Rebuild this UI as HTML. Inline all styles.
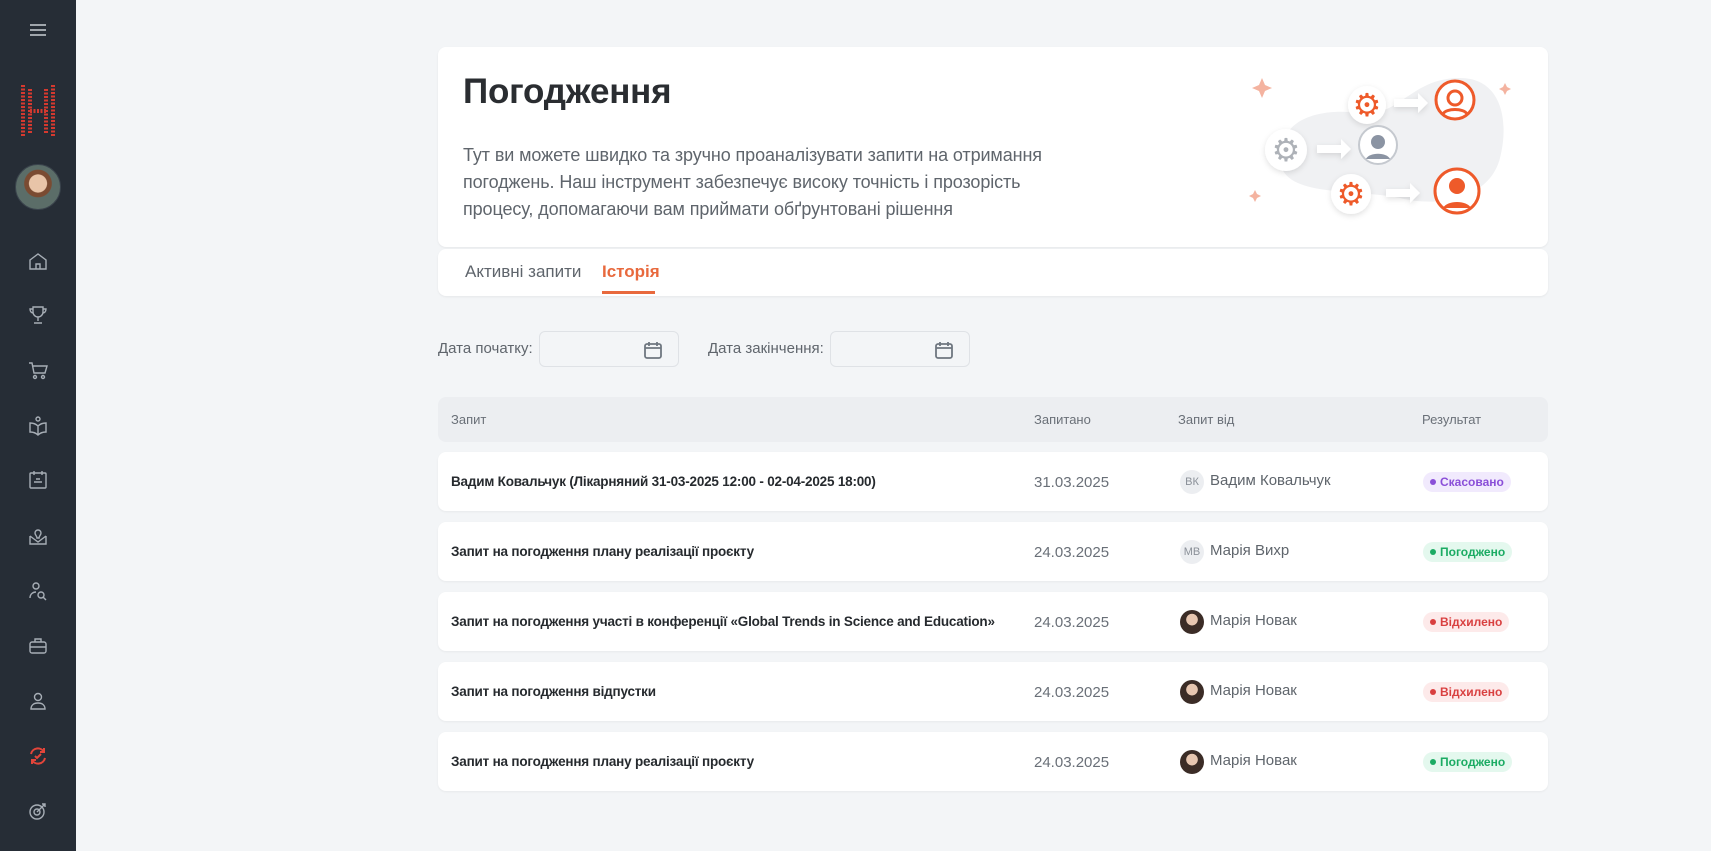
<!DOCTYPE html>
<html><head><meta charset="utf-8"><style>
*{box-sizing:border-box;margin:0;padding:0}
body{width:1711px;height:851px;background:#f3f5f7;font-family:"Liberation Sans",sans-serif;position:relative;overflow:hidden;color:#2b2f33}
.sb{position:absolute;left:0;top:0;width:76px;height:851px;background:#262d36}
.ic{position:absolute;left:26px;width:24px;height:24px}
.card{position:absolute;left:438px;width:1110px;background:#fff;border-radius:8px;box-shadow:0 1px 2px rgba(0,0,0,.06)}
h1{position:absolute;left:463px;top:72px;font-size:35px;font-weight:bold;color:#2a2d31;letter-spacing:-.2px}
.p{position:absolute;left:463px;top:142px;font-size:18px;line-height:27px;color:#5f656c;letter-spacing:-.1px}
.tab{position:absolute;top:262px;font-size:17px}
.lbl{position:absolute;top:340px;font-size:15px;color:#5f656c}
.inp{position:absolute;top:331px;width:140px;height:36px;border:1px solid #dfe2e6;border-radius:6px;background:#f3f5f7}
.inp svg{position:absolute;right:15px;top:8px}
.th{position:absolute;top:397px;left:438px;width:1110px;height:45px;background:#eceef1;border-radius:8px}
.th span{position:absolute;top:15px;font-size:13px;color:#6a7078}
.row{position:absolute;left:438px;width:1110px;height:59px;background:#fff;border-radius:8px;box-shadow:0 1px 2px rgba(0,0,0,.05)}
.row .t{position:absolute;left:13px;top:22px;font-size:13.5px;font-weight:bold;color:#262a2e;letter-spacing:-.2px}
.row .d{position:absolute;left:596px;top:22px;font-size:15px;color:#6a7078}
.row .av{position:absolute;left:742px;top:18px;width:24px;height:24px;border-radius:50%;background:#eceef1;font-size:11px;color:#8a9098;text-align:center;line-height:24px}
.row .av.ph{background:radial-gradient(circle at 50% 40%,#e7c6b0 0 30%,#3b2c26 32%)}
.row .n{position:absolute;left:772px;top:20px;font-size:15px;color:#5f656c}
.b{position:absolute;left:985px;top:20px;height:20px;border-radius:10px;font-size:12px;padding:0 7px 0 17px;line-height:20px;font-weight:bold}
.b:before{content:"";position:absolute;left:7px;top:7px;width:6px;height:6px;border-radius:50%;background:currentColor}
.g{background:#e4f8ee;color:#1bab63}.r{background:#fdeaea;color:#d94040}.v{background:#f1eafd;color:#8a4fd8}
</style></head><body>
<div class="sb">
<svg class="ic" style="top:18px" viewBox="0 0 24 24" stroke="#c9ced4" stroke-width="1.6"><path d="M4 7h16M4 12h16M4 17h16"/></svg>
<svg style="position:absolute;left:20px;top:85px" width="36" height="52" viewBox="0 0 36 52"><g fill="none" stroke="#d5392f" stroke-width="4" stroke-dasharray="2 1.5"><path d="M3 0v52M10 4v44M26 4v44M33 0v52M10 26h16"/></g></svg>
<div style="position:absolute;left:15px;top:164px;width:46px;height:46px;border-radius:50%;background:radial-gradient(circle at 50% 42%,#e8c4a8 0 26%,#7a4b32 28% 40%,#5b6d68 42%);border:1px solid #3a434c"></div>
<svg class="ic" style="top:249px" viewBox="0 0 24 24" fill="none" stroke="#a7aeb6" stroke-width="1.4"><path d="M4 11l8-6 8 6v9H4zM10 20v-5h4v5"/></svg>
<svg class="ic" style="top:303px" viewBox="0 0 24 24" fill="none" stroke="#a7aeb6" stroke-width="1.4"><path d="M7 4h10v5a5 5 0 01-10 0zM7 6H4c0 3 2 4 3 4M17 6h3c0 3-2 4-3 4M12 14v4M8 20h8"/></svg>
<svg class="ic" style="top:358px" viewBox="0 0 24 24" fill="none" stroke="#a7aeb6" stroke-width="1.4"><path d="M3 5h3l2 10h11l2-7H7"/><circle cx="9" cy="19" r="1.5"/><circle cx="17" cy="19" r="1.5"/></svg>
<svg class="ic" style="top:414px" viewBox="0 0 24 24" fill="none" stroke="#a7aeb6" stroke-width="1.4"><circle cx="12" cy="5" r="2"/><path d="M4 9c3 0 6 1 8 3 2-2 5-3 8-3v9c-3 0-6 1-8 3-2-2-5-3-8-3zM12 12v9"/></svg>
<svg class="ic" style="top:468px" viewBox="0 0 24 24" fill="none" stroke="#a7aeb6" stroke-width="1.4"><rect x="4" y="5" width="16" height="15" rx="1"/><path d="M8 3v4M16 3v4M8 14h8M10 11h4"/></svg>
<svg class="ic" style="top:524px" viewBox="0 0 24 24" fill="none" stroke="#a7aeb6" stroke-width="1.4"><path d="M4 12v8h16v-8M4 12l8 6 8-6"/><path d="M9 9a3 3 0 116 0c0 2-2 3-2 5h-2c0-2-2-3-2-5z"/></svg>
<svg class="ic" style="top:579px" viewBox="0 0 24 24" fill="none" stroke="#a7aeb6" stroke-width="1.4"><circle cx="10" cy="7" r="3"/><path d="M4 19c0-4 3-6 6-6"/><circle cx="15" cy="16" r="3"/><path d="M17 18l3 3"/></svg>
<svg class="ic" style="top:634px" viewBox="0 0 24 24" fill="none" stroke="#a7aeb6" stroke-width="1.4"><rect x="4" y="8" width="16" height="11" rx="2"/><path d="M9 8V5h6v3M4 13h16"/></svg>
<svg class="ic" style="top:689px" viewBox="0 0 24 24" fill="none" stroke="#a7aeb6" stroke-width="1.4"><circle cx="12" cy="8" r="3.5"/><path d="M5 20c0-4 3-6 7-6s7 2 7 6z"/></svg>
<svg class="ic" style="top:744px" viewBox="0 0 24 24" fill="none" stroke="#e3453a" stroke-width="2"><path d="M5 10a7 7 0 0113-2M19 14a7 7 0 01-13 2M18 4v4h-4M6 20v-4h4M9 12l2 2 4-4"/></svg>
<svg class="ic" style="top:799px" viewBox="0 0 24 24" fill="none" stroke="#a7aeb6" stroke-width="1.4"><circle cx="11" cy="13" r="7"/><circle cx="11" cy="13" r="3"/><path d="M11 13l8-8M16 5h3v3"/></svg>
</div>

<div class="card" style="top:47px;height:200px"></div>
<h1>Погодження</h1>
<div class="p">Тут ви можете швидко та зручно проаналізувати запити на отримання<br>погоджень. Наш інструмент забезпечує високу точність і прозорість<br>процесу, допомагаючи вам приймати обґрунтовані рішення</div>

<svg style="position:absolute;left:1240px;top:68px" width="280" height="160" viewBox="0 0 280 160">
<defs><filter id="s" x="-50%" y="-50%" width="200%" height="200%"><feDropShadow dx="0" dy="2" stdDeviation="3" flood-opacity=".12"/></filter></defs>
<path d="M40 90c0-40 40-50 80-45 40 5 50-35 100-35 40 0 50 40 40 80-10 40-60 50-100 40C110 120 40 130 40 90z" fill="#f0f1f3"/>
<g fill="#f4b3a0"><path d="M22 10l3 7 7 3-7 3-3 7-3-7-7-3 7-3z"/><path d="M265 15l2 4 4 2-4 2-2 4-2-4-4-2 4-2z"/><path d="M15 122l2 4 4 2-4 2-2 4-2-4-4-2 4-2z"/></g>
<g fill="#fff" filter="url(#s)"><circle cx="127" cy="37" r="19"/><circle cx="46" cy="82" r="21"/><circle cx="111" cy="126" r="20"/></g>
<g font-size="32" font-family="DejaVu Sans" text-anchor="middle"><text x="127" y="48" fill="#ee5a2a">⚙</text><text x="46" y="93" fill="#aeb2b8">⚙</text><text x="111" y="137" fill="#ee5a2a">⚙</text></g>
<g fill="#fff" filter="url(#s)"><path d="M154 31h24v-6l10 10-10 10v-6h-24z"/><path d="M77 77h24v-6l10 10-10 10v-6H77z"/><path d="M146 121h24v-6l10 10-10 10v-6h-24z"/></g>
<circle cx="215" cy="32" r="19" fill="#fff" stroke="#ee5a2a" stroke-width="3"/><circle cx="215" cy="30" r="7" fill="none" stroke="#ee5a2a" stroke-width="3"/><path d="M203 46c3-6 21-6 24 0" stroke="#ee5a2a" stroke-width="3" fill="none"/>
<circle cx="138" cy="77" r="19" fill="#fff" stroke="#c5c9cf" stroke-width="2"/><circle cx="138" cy="74" r="7" fill="#8b94a3"/><path d="M126 91c3-7 21-7 24 0z" fill="#8b94a3"/>
<circle cx="217" cy="123" r="22" fill="#fff" stroke="#ee5a2a" stroke-width="3"/><circle cx="217" cy="118" r="8" fill="#ee5a2a"/><path d="M203 140c4-8 24-8 28 0z" fill="#ee5a2a"/>
</svg>

<div class="card" style="top:249px;height:47px"></div>
<div class="tab" style="left:465px;color:#5f656c">Активні запити</div>
<div class="tab" style="left:602px;color:#e8693d;font-weight:bold">Історія</div>
<div style="position:absolute;left:602px;top:291px;width:53px;height:3px;background:#e8693d"></div>

<div class="lbl" style="left:438px">Дата початку:</div>
<div class="inp" style="left:539px"><svg width="20" height="20" viewBox="0 0 20 20" fill="none" stroke="#6f7780" stroke-width="1.8"><rect x="2" y="4" width="16" height="14" rx="2"/><path d="M2 8h16M6 2v4M14 2v4"/></svg></div>
<div class="lbl" style="left:708px">Дата закінчення:</div>
<div class="inp" style="left:830px"><svg width="20" height="20" viewBox="0 0 20 20" fill="none" stroke="#6f7780" stroke-width="1.8"><rect x="2" y="4" width="16" height="14" rx="2"/><path d="M2 8h16M6 2v4M14 2v4"/></svg></div>

<div class="th"><span style="left:13px">Запит</span><span style="left:596px">Запитано</span><span style="left:740px">Запит від</span><span style="left:984px">Результат</span></div>

<div class="row" style="top:452px"><div class="t">Вадим Ковальчук (Лікарняний 31-03-2025 12:00 - 02-04-2025 18:00)</div><div class="d">31.03.2025</div><div class="av">ВК</div><div class="n">Вадим Ковальчук</div><div class="b v">Скасовано</div></div>
<div class="row" style="top:522px"><div class="t">Запит на погодження плану реалізації проєкту</div><div class="d">24.03.2025</div><div class="av">МВ</div><div class="n">Марія Вихр</div><div class="b g">Погоджено</div></div>
<div class="row" style="top:592px"><div class="t">Запит на погодження участі в конференції «Global Trends in Science and Education»</div><div class="d">24.03.2025</div><div class="av ph"></div><div class="n">Марія Новак</div><div class="b r">Відхилено</div></div>
<div class="row" style="top:662px"><div class="t">Запит на погодження відпустки</div><div class="d">24.03.2025</div><div class="av ph"></div><div class="n">Марія Новак</div><div class="b r">Відхилено</div></div>
<div class="row" style="top:732px"><div class="t">Запит на погодження плану реалізації проєкту</div><div class="d">24.03.2025</div><div class="av ph"></div><div class="n">Марія Новак</div><div class="b g">Погоджено</div></div>
</body></html>
